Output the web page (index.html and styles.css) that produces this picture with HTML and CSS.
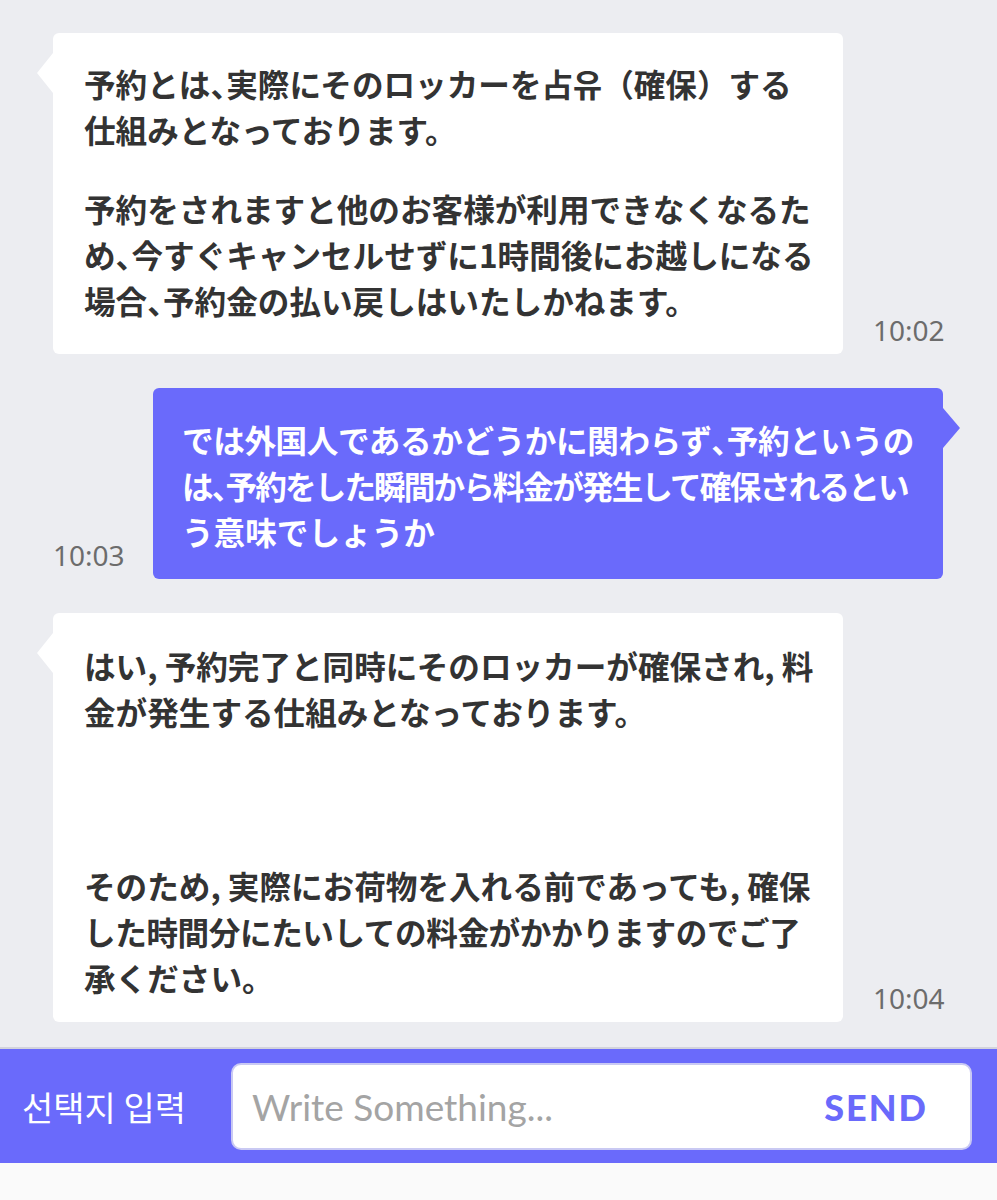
FILE: index.html
```html
<!DOCTYPE html>
<html lang="ja">
<head>
<meta charset="utf-8">
<title>Chat</title>
<link rel="stylesheet" href="styles.css">
</head>
<body>
<div class="page">
  <main class="messages">
    <div class="row row-in">
      <div class="bubble bubble-in b1">
        <p>予約とは<span class="p">、</span>実際にそのロッカーを占유（確保）する<br>仕組みとなっております。</p>
        <p class="gap1">予約をされますと他のお客様が利用できなくなるた<br>め<span class="p">、</span>今すぐキャンセルせずに1時間後にお越しになる<br>場合<span class="p">、</span>予約金の払い戻しはいたしかねます。</p>
      </div>
      <span class="time">10:02</span>
    </div>
    <div class="row row-out">
      <span class="time">10:03</span>
      <div class="bubble bubble-out b2">
        <p><span class="tight1">では外国人であるかどうかに関わらず<span class="p">、</span>予約というの</span><br><span class="tight2">は<span class="p">、</span>予約をした瞬間から料金が発生して確保されるとい</span><br>う意味でしょうか</p>
      </div>
    </div>
    <div class="row row-in">
      <div class="bubble bubble-in b3">
        <p>はい, 予約完了と同時にそのロッカーが確保され, 料<br>金が発生する仕組みとなっております。</p>
        <p class="gap3">そのため, 実際にお荷物を入れる前であっても, 確保<br><span class="tight3">した時間分にたいしての料金がかかりますのでご了</span><br>承ください。</p>
      </div>
      <span class="time">10:04</span>
    </div>
  </main>
  <footer class="composer">
    <span class="choice">선택지 입력</span>
    <div class="input">
      <span class="placeholder">Write Something...</span>
      <span class="send">SEND</span>
    </div>
  </footer>
  <div class="bottom"></div>
</div>
</body>
</html>
```
FILE: styles.css
```css
* { box-sizing: border-box; }
html, body { margin: 0; padding: 0; }
body {
  background: #ecedf1;
  font-family: "Noto Sans CJK JP", "Noto Sans", sans-serif;
}
.page { display: flex; flex-direction: column; min-height: 1200px; }
.messages {
  display: flex;
  flex-direction: column;
  gap: 34px;
  padding: 33px 54px 25px 53px;
}
.row { display: flex; align-items: flex-end; }
.row-in { gap: 30px; }
.row-out { justify-content: space-between; }
.bubble {
  position: relative;
  flex: 0 0 790px;
  width: 790px;
  border-radius: 6px;
  font-size: 31.6px;
  line-height: 46px;
  font-weight: 700;
  white-space: nowrap;
}
.bubble p { margin: 0; }
.bubble .p { font-feature-settings: "halt"; }
.tight1 { letter-spacing: -0.4px; }
.tight2 { letter-spacing: -1.9px; }
.tight3 { letter-spacing: -0.4px; }
.bubble-in { background: #ffffff; color: #333333; padding-left: 31px; }
.bubble-out { background: #6a6afb; color: #ffffff; padding-left: 29px; }
.bubble-in::before {
  content: "";
  position: absolute;
  left: -16px;
  top: 20px;
  border-style: solid;
  border-width: 20px 16px 20px 0;
  border-color: transparent #ffffff transparent transparent;
}
.bubble-out::after {
  content: "";
  position: absolute;
  right: -17px;
  top: 20px;
  border-style: solid;
  border-width: 20px 0 20px 17px;
  border-color: transparent transparent transparent #6a6afb;
}
.b1 { padding-top: 27px; padding-bottom: 31px; }
.b1 .gap1 { margin-top: 33px; }
.b2 { padding-top: 28px; padding-bottom: 25px; }
.b3 { padding-top: 29px; padding-bottom: 22px; }
.b3 .gap3 { margin-top: 128px; }
.time {
  font-family: "Noto Sans", "Open Sans", sans-serif;
  font-size: 28px;
  color: #6c6c6c;
  line-height: 32px;
  margin-bottom: 8px;
}
.composer {
  display: flex;
  align-items: center;
  gap: 45px;
  background: #6a6afb;
  border-top: 2px solid #d2d3dc;
  padding: 14px 25px 13px 22px;
}
.choice {
  font-family: "Noto Sans CJK KR", sans-serif;
  font-size: 34px;
  color: #ffffff;
  white-space: nowrap;
}
.input {
  flex: 1;
  height: 87px;
  display: flex;
  align-items: center;
  justify-content: space-between;
  background: #ffffff;
  border: 2px solid #c9c9f3;
  border-radius: 10px;
  padding: 0 42px 0 19px;
}
.placeholder {
  font-family: Lato, "Open Sans", sans-serif;
  font-size: 37px;
  color: #a4a4a4;
}
.send {
  font-family: Lato, sans-serif;
  font-weight: 900;
  font-size: 36px;
  letter-spacing: 2px;
  color: #6a6afb;
}
.bottom { flex: 1; background: #fafafa; }
```
